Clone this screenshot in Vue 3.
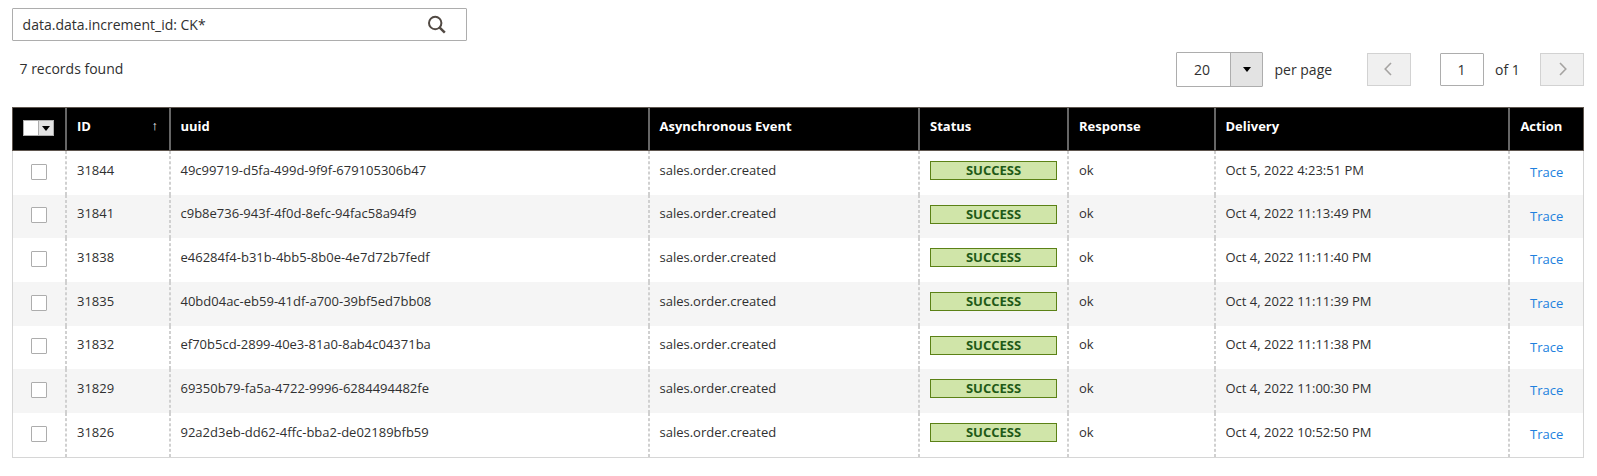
<script setup>
const rows = [
  ['31844', '49c99719-d5fa-499d-9f9f-679105306b47', 'Oct 5, 2022 4:23:51 PM'],
  ['31841', 'c9b8e736-943f-4f0d-8efc-94fac58a94f9', 'Oct 4, 2022 11:13:49 PM'],
  ['31838', 'e46284f4-b31b-4bb5-8b0e-4e7d72b7fedf', 'Oct 4, 2022 11:11:40 PM'],
  ['31835', '40bd04ac-eb59-41df-a700-39bf5ed7bb08', 'Oct 4, 2022 11:11:39 PM'],
  ['31832', 'ef70b5cd-2899-40e3-81a0-8ab4c04371ba', 'Oct 4, 2022 11:11:38 PM'],
  ['31829', '69350b79-fa5a-4722-9996-6284494482fe', 'Oct 4, 2022 11:00:30 PM'],
  ['31826', '92a2d3eb-dd62-4ffc-bba2-de02189bfb59', 'Oct 4, 2022 10:52:50 PM'],
]
</script>

<template>
  <main class="page">
    <div class="search">
      <span>data.data.increment_id: CK*</span>
      <svg class="glass" width="20" height="20" viewBox="0 0 20 20">
        <circle cx="8.2" cy="8" r="6.2" fill="none" stroke="#514943" stroke-width="2" />
        <path d="M12.5 12.4L17.8 17.6" stroke="#514943" stroke-width="2.5" fill="none" />
      </svg>
    </div>
    <div class="toolbar">
      <span class="found">7 records found</span>
      <div class="pager">
        <div class="select">
          <span class="value">20</span>
          <span class="arrow"><svg width="8" height="5" viewBox="0 0 8 5"><path d="M0 0H8L4 5Z" /></svg></span>
        </div>
        <span class="per">per page</span>
        <button class="nav prev"><svg width="8" height="14" viewBox="0 0 8 14"><path d="M7 1L1.2 7L7 13" /></svg></button>
        <span class="current">1</span>
        <span class="of">of 1</span>
        <button class="nav next"><svg width="8" height="14" viewBox="0 0 8 14"><path d="M1 1L6.8 7L1 13" /></svg></button>
      </div>
    </div>
    <div class="table">
      <div class="row head">
        <div class="cell pick">
          <span class="multi"><i class="box"></i><i class="drop"><svg width="8" height="5" viewBox="0 0 8 5"><path d="M0 0H8L4 5Z" /></svg></i></span>
        </div>
        <div class="cell sorted"><span>ID</span><span class="sort">↑</span></div>
        <div class="cell snug">uuid</div>
        <div class="cell snug">Asynchronous Event</div>
        <div class="cell">Status</div>
        <div class="cell">Response</div>
        <div class="cell snug">Delivery</div>
        <div class="cell last">Action</div>
      </div>
      <div class="body">
        <div v-for="r in rows" :key="r[0]" class="row">
          <div class="cell pick"><span class="check"></span></div>
          <div class="cell">{{ r[0] }}</div>
          <div class="cell snug">{{ r[1] }}</div>
          <div class="cell snug">sales.order.created</div>
          <div class="cell status"><span class="badge">SUCCESS</span></div>
          <div class="cell">ok</div>
          <div class="cell snug">{{ r[2] }}</div>
          <div class="cell action"><a>Trace</a></div>
        </div>
      </div>
    </div>
  </main>
</template>

<style>
body { margin: 0; background: #fff; }
</style>

<style scoped>
.page {
  box-sizing: border-box;
  width: 1597px;
  height: 476px;
  padding: 8px 13px 0 12px;
  font-family: "Open Sans", "Noto Sans", sans-serif;
  font-size: 14px;
  color: #41362f;
}
.page * { box-sizing: border-box; }
.search {
  display: flex;
  align-items: center;
  justify-content: space-between;
  width: 455px;
  height: 33px;
  padding: 0 19px 0 10px;
  border: 1px solid #adadad;
  border-radius: 1px;
  color: #303030;
}
.search span { margin-left: -0.4px; }
.glass { display: block; }
.toolbar {
  display: flex;
  justify-content: space-between;
  height: 66px;
  padding-top: 11px;
  color: #303030;
}
.found { padding: 7px 0 0 7.5px; line-height: 20px; }
.pager { display: flex; align-items: flex-start; line-height: 20px; }
.select {
  display: flex;
  width: 87px;
  height: 35px;
  border: 1px solid #adadad;
  border-radius: 1px;
}
.value { width: 53px; padding: 7px 3px 0 0; text-align: center; }
.arrow {
  display: flex;
  flex: 1;
  align-items: center;
  justify-content: center;
  border-left: 1px solid #adadad;
  background: #e3e3e3;
}
.per { width: 104px; padding: 8px 0 0 11.5px; }
.nav {
  display: flex;
  justify-content: center;
  width: 44px;
  height: 33px;
  margin: 1px 0 0;
  padding: 8px 0 0;
  border: 1px solid #d2d2d2;
  background: #f0f0f0;
}
.nav path { fill: none; stroke: #a5a3a1; stroke-width: 1.6; }
.prev { padding-right: 3px; }
.next { padding-left: 2px; }
.current {
  width: 44px;
  height: 33px;
  margin: 1px 0 0 29px;
  padding: 6px 1px 0 0;
  border: 1px solid #adadad;
  border-radius: 1px;
  text-align: center;
}
.of { width: 56px; padding: 8px 0 0 11px; }
.table { width: 1572px; font-size: 13px; line-height: 18px; }
.row {
  display: grid;
  grid-template-columns: 53px 104px 479px 270px 149px 147px 294px 74px;
}
.body {
  display: grid;
  grid-template-rows: repeat(7, 43.66px);
  height: 307px;
  border: 1px solid #d6d6d6;
  border-top: 0;
  color: #303030;
}
.body .row:nth-child(even) { background: #f5f5f5; }
.cell { padding: 9.7px 10px 0; border-right: 1px dashed #d0d0d0; border-left: 1px dashed #d0d0d0; }
.snug { padding-left: 9.5px; }
.body .cell:first-child { border-left: 0; }
.body .cell:last-child { border-right: 0; }
.head {
  height: 44px;
  border: 1px solid #5f564f;
  background: #000;
  color: #fff;
  font-weight: 700;
}
.head .cell { padding-top: 9px; border-right: 1px solid #666; border-left: 1px solid #666; }
.head .cell:first-child { border-left: 0; }
.head .cell:last-child { border-right: 0; }
.last { padding-left: 10.4px; }
.sorted { display: flex; justify-content: space-between; }
.sort { margin: -1px 1px 0 0; font-weight: 400; font-size: 13px; }
.multi { display: flex; width: 31px; height: 16px; margin-top: 3px; border: 1px solid #adadad; background: #fff; }
.box { width: 14px; }
.drop { display: flex; flex: 1; align-items: center; justify-content: center; border-left: 1px solid #adadad; background: #e3e3e3; }
.check {
  display: block;
  width: 16px;
  height: 16px;
  margin: 3px 0 0 8px;
  border: 1px solid #adadad;
  border-radius: 1px;
  background: #fff;
}
.status { padding-top: 10px; }
.badge {
  display: block;
  width: 127px;
  height: 19px;
  border: 1px solid #5b8116;
  background: #d0e5a9;
  color: #1f5a17;
  font-weight: 700;
  line-height: 17px;
  text-align: center;
}
.action { padding-top: 12px; padding-left: 20px; }
.action a { color: #2080de; }
</style>
